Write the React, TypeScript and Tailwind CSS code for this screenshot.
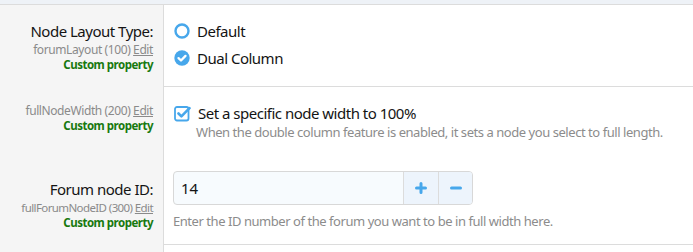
import React from "react"

const font = { fontFamily: '"Segoe UI", "Noto Sans", sans-serif' }

function Radio({ checked }: { checked?: boolean }) {
  if (checked) {
    return (
      <svg width="16" height="16" viewBox="0 0 16 16" className="shrink-0">
        <circle cx="8" cy="8" r="7.7" fill="#47a7eb" />
        <path d="M4.5 8.1 L7 10.5 L11.5 5.9" fill="none" stroke="#fff" strokeWidth="2.3" strokeLinecap="round" strokeLinejoin="round" />
      </svg>
    )
  }
  return (
    <svg width="16" height="16" viewBox="0 0 16 16" className="shrink-0">
      <circle cx="8" cy="8" r="6.5" fill="none" stroke="#47a7eb" strokeWidth="2.4" />
    </svg>
  )
}

function CheckBox() {
  return (
    <svg width="17" height="17" viewBox="0 0 17 17" className="shrink-0">
      <rect x="1" y="2" width="13.5" height="13.5" rx="2" fill="none" stroke="#47a7eb" strokeWidth="1.8" />
      <path d="M4.5 8.5 L7.4 11.4 L15.5 3.2" fill="none" stroke="#47a7eb" strokeWidth="2.6" strokeLinecap="round" strokeLinejoin="round" />
    </svg>
  )
}

function PropInfo({ name, tight }: { name: string; tight?: boolean }) {
  return (
    <>
      <div
        className={
          tight
            ? "whitespace-nowrap text-[11.5px] leading-[15px] tracking-[-0.6px] text-[#8a8a8a]"
            : "whitespace-nowrap text-[12px] leading-[15px] tracking-[-0.4px] text-[#8a8a8a]"
        }
      >
        {name} <span className="underline">Edit</span>
      </div>
      <div className="whitespace-nowrap text-[11.5px] leading-[15px] tracking-[-0.5px] font-bold text-[#18790f]">
        Custom property
      </div>
    </>
  )
}

export default function App() {
  return (
    <div className="w-[693px] h-[252px] overflow-hidden bg-white text-[#141414]" style={font}>
      <div className="h-[5px] bg-[#eef2f7] border-b border-[#dcdcdc]" />

      {/* Node layout type */}
      <div className="flex h-[82px]">
        <div className="w-[164px] shrink-0 bg-[#f5f5f5] border-r border-[#dcdcdc] text-right pr-[10px] pt-[16px]">
          <div className="text-[15px] leading-[21px] tracking-[-0.5px]">Node Layout Type:</div>
          <PropInfo name="forumLayout (100)" />
        </div>
        <div className="flex-1 border-b border-[#dcdcdc] pl-[10px] pt-[16px] flex flex-col gap-[7px] text-[15px] tracking-[-0.5px]">
          <label className="flex items-center gap-[7px] h-[20px]">
            <Radio />
            <span>Default</span>
          </label>
          <label className="flex items-center gap-[7px] h-[20px]">
            <Radio checked />
            <span>Dual Column</span>
          </label>
        </div>
      </div>

      {/* Full node width */}
      <div className="flex h-[76px]">
        <div className="w-[164px] shrink-0 bg-[#f5f5f5] border-r border-[#dcdcdc] text-right pr-[10px] pt-[16px]">
          <PropInfo name="fullNodeWidth (200)" />
        </div>
        <div className="flex-1 pl-[10px] pt-[16px]">
          <label className="flex items-center gap-[7px] h-[20px] text-[15px] tracking-[-0.5px]">
            <CheckBox />
            <span>Set a specific node width to 100%</span>
          </label>
          <div className="pl-[22px] whitespace-nowrap text-[13px] leading-[18px] tracking-[-0.45px] text-[#8c8c8c]">
            When the double column feature is enabled, it sets a node you select to full length.
          </div>
        </div>
      </div>

      {/* Forum node ID */}
      <div className="flex h-[82px]">
        <div className="w-[164px] shrink-0 bg-[#f5f5f5] border-r border-[#dcdcdc] text-right pr-[10px] pt-[16px]">
          <div className="text-[15px] leading-[21px] tracking-[-0.5px]">Forum node ID:</div>
          <PropInfo name="fullForumNodeID (300)" tight />
        </div>
        <div className="flex-1 border-b border-[#dcdcdc] pl-[9px] pt-[8px]">
          <div className="flex w-[300px] h-[34px] rounded-[4px] border border-[#d8d8d8] bg-[#f7fbfe] overflow-hidden">
            <div className="flex-1 flex items-center pl-[7px] text-[15px]">14</div>
            <div className="w-[35px] flex items-center justify-center border-l border-[#dcdcdc] bg-[#edf4fc]">
              <svg width="12" height="12" viewBox="0 0 12 12">
                <path d="M6 1.5 V10.5 M1.5 6 H10.5" stroke="#47a7eb" strokeWidth="3" strokeLinecap="round" />
              </svg>
            </div>
            <div className="w-[34px] flex items-center justify-center border-l border-[#dcdcdc] bg-[#edf4fc]">
              <svg width="12" height="12" viewBox="0 0 12 12">
                <path d="M1.5 6 H10.5" stroke="#47a7eb" strokeWidth="3" strokeLinecap="round" />
              </svg>
            </div>
          </div>
          <div className="mt-[7px] whitespace-nowrap text-[13px] leading-[18px] tracking-[-0.45px] text-[#8c8c8c]">
            Enter the ID number of the forum you want to be in full width here.
          </div>
        </div>
      </div>

      <div className="flex h-[20px]">
        <div className="w-[164px] shrink-0 bg-[#f5f5f5] border-r border-[#dcdcdc]" />
        <div className="flex-1" />
      </div>
    </div>
  )
}
